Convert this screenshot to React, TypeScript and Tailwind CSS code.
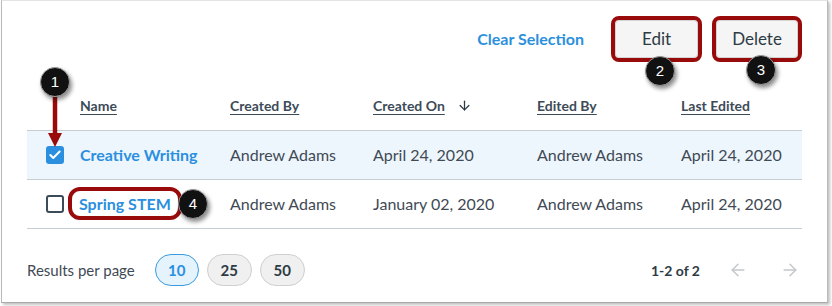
import { ArrowDown, ArrowLeft, ArrowRight, Check } from "lucide-react";

const rows = [
  { name: "Creative Writing", createdBy: "Andrew Adams", createdOn: "April 24, 2020", editedBy: "Andrew Adams", lastEdited: "April 24, 2020", selected: true },
  { name: "Spring STEM", createdBy: "Andrew Adams", createdOn: "January 02, 2020", editedBy: "Andrew Adams", lastEdited: "April 24, 2020", selected: false },
];

const cols = "grid grid-cols-[53px_150px_143px_164px_144px_1fr] items-center";

const Callout = ({ n, className }: { n: number; className: string }) => (
  <div
    className={`absolute w-[30px] h-[30px] rounded-full bg-[#111] border border-[#9a9a9a] shadow-[2px_3px_4px_rgba(0,0,0,0.45)] flex items-center justify-center text-white text-[15px] font-['Liberation_Sans',sans-serif] ${className}`}
  >
    {n}
  </div>
);

export default function App() {
  return (
    <div className="w-[832px] h-[306px] bg-white font-['Lato',sans-serif]">
      <div className="relative ml-[1px] w-[827px] h-[303px] border border-t-[#e4e4e4] border-x-[#b9b9b9] border-b-[#a9a9a9] shadow-[2px_2px_3px_rgba(0,0,0,0.25)] px-[25px] pt-[19px]">
        {/* action bar */}
        <div className="flex items-center justify-end h-[38px] pr-[4px]">
          <button className="mr-[31px] text-[16px] font-bold text-[#2b90dc]">Clear Selection</button>
          <button className="w-[83px] h-[38px] rounded-[4px] bg-[#f5f5f5] border border-[#d4d4d4] text-[17px] text-[#2d3b45] outline-[4px] outline-[#990b0b]">
            Edit
          </button>
          <button className="ml-[18px] w-[82px] h-[38px] rounded-[4px] bg-[#f5f5f5] border border-[#d4d4d4] text-[17px] text-[#2d3b45] outline-[4px] outline-[#990b0b]">
            Delete
          </button>
        </div>

        {/* table */}
        <div className="mt-[23px]">
          <div className={`${cols} h-[49px] text-[14px] font-bold text-[#3d4b58]`}>
            <span />
            <span className="underline underline-offset-[3px]">Name</span>
            <span className="underline underline-offset-[3px]">Created By</span>
            <span className="flex items-center gap-[12px]">
              <span className="underline underline-offset-[3px]">Created On</span>
              <ArrowDown className="w-[15px] h-[15px] text-[#2d3b45]" strokeWidth={2} />
            </span>
            <span className="underline underline-offset-[3px]">Edited By</span>
            <span className="underline underline-offset-[3px]">Last Edited</span>
          </div>
          <div className="border-t border-[#c7cdd1]">
            {rows.map((r) => (
              <div
                key={r.name}
                className={`${cols} h-[49px] border-b border-[#c7cdd1] text-[16px] text-[#3f4a55] ${r.selected ? "bg-[#eef6fd]" : ""}`}
              >
                <span className="pl-[19px]">
                  {r.selected ? (
                    <span className="w-[18px] h-[18px] rounded-[3px] bg-[#2b8fe0] flex items-center justify-center">
                      <Check className="w-[14px] h-[14px] text-white" strokeWidth={3.5} />
                    </span>
                  ) : (
                    <span className="block w-[18px] h-[18px] rounded-[3px] border-2 border-[#3d4b58] bg-white" />
                  )}
                </span>
                <span>
                  <span
                    className={`font-bold text-[#2b8fe0] ${r.selected ? "" : "-ml-[8px] px-[7px] py-[3px] rounded-[8px] outline-[4px] outline-[#990b0b]"}`}
                  >
                    {r.name}
                  </span>
                </span>
                <span>{r.createdBy}</span>
                <span>{r.createdOn}</span>
                <span>{r.editedBy}</span>
                <span>{r.lastEdited}</span>
              </div>
            ))}
          </div>
        </div>

        {/* footer */}
        <div className="mt-[25px] h-[32px] flex items-center">
          <span className="text-[15px] text-[#3f4a55]">Results per page</span>
          <div className="ml-[20px] flex gap-[8px]">
            <button className="w-[44px] h-[32px] rounded-full bg-[#e5f3fd] border border-[#3a9be0] text-[15px] font-bold text-[#2b8fe0]">10</button>
            <button className="w-[45px] h-[32px] rounded-full bg-[#f0f0f0] border border-[#cfcfcf] text-[15px] font-bold text-[#2d3b45]">25</button>
            <button className="w-[45px] h-[32px] rounded-full bg-[#f0f0f0] border border-[#cfcfcf] text-[15px] font-bold text-[#2d3b45]">50</button>
          </div>
          <div className="ml-auto flex items-center">
            <span className="text-[14px] font-bold text-[#2d3b45]">1-2 of 2</span>
            <span className="ml-[26px] w-[24px] flex justify-center">
              <ArrowLeft className="w-[20px] h-[20px] text-[#c3c8cc]" strokeWidth={1.75} />
            </span>
            <span className="ml-[28px] w-[24px] flex justify-center">
              <ArrowRight className="w-[20px] h-[20px] text-[#c3c8cc]" strokeWidth={1.75} />
            </span>
          </div>
        </div>

        {/* annotation overlays */}
        <svg className="absolute left-[45px] top-[96px]" width="18" height="52" viewBox="0 0 18 52">
          <line x1="8" y1="0" x2="8" y2="38" stroke="#990b0b" strokeWidth="4.5" />
          <polygon points="1,36 15,36 8,50" fill="#990b0b" />
        </svg>
        <Callout n={1} className="left-[38px] top-[66px]" />
        <Callout n={2} className="left-[643px] top-[55px]" />
        <Callout n={3} className="left-[744px] top-[54px]" />
        <Callout n={4} className="left-[176px] top-[188px]" />
      </div>
    </div>
  );
}
